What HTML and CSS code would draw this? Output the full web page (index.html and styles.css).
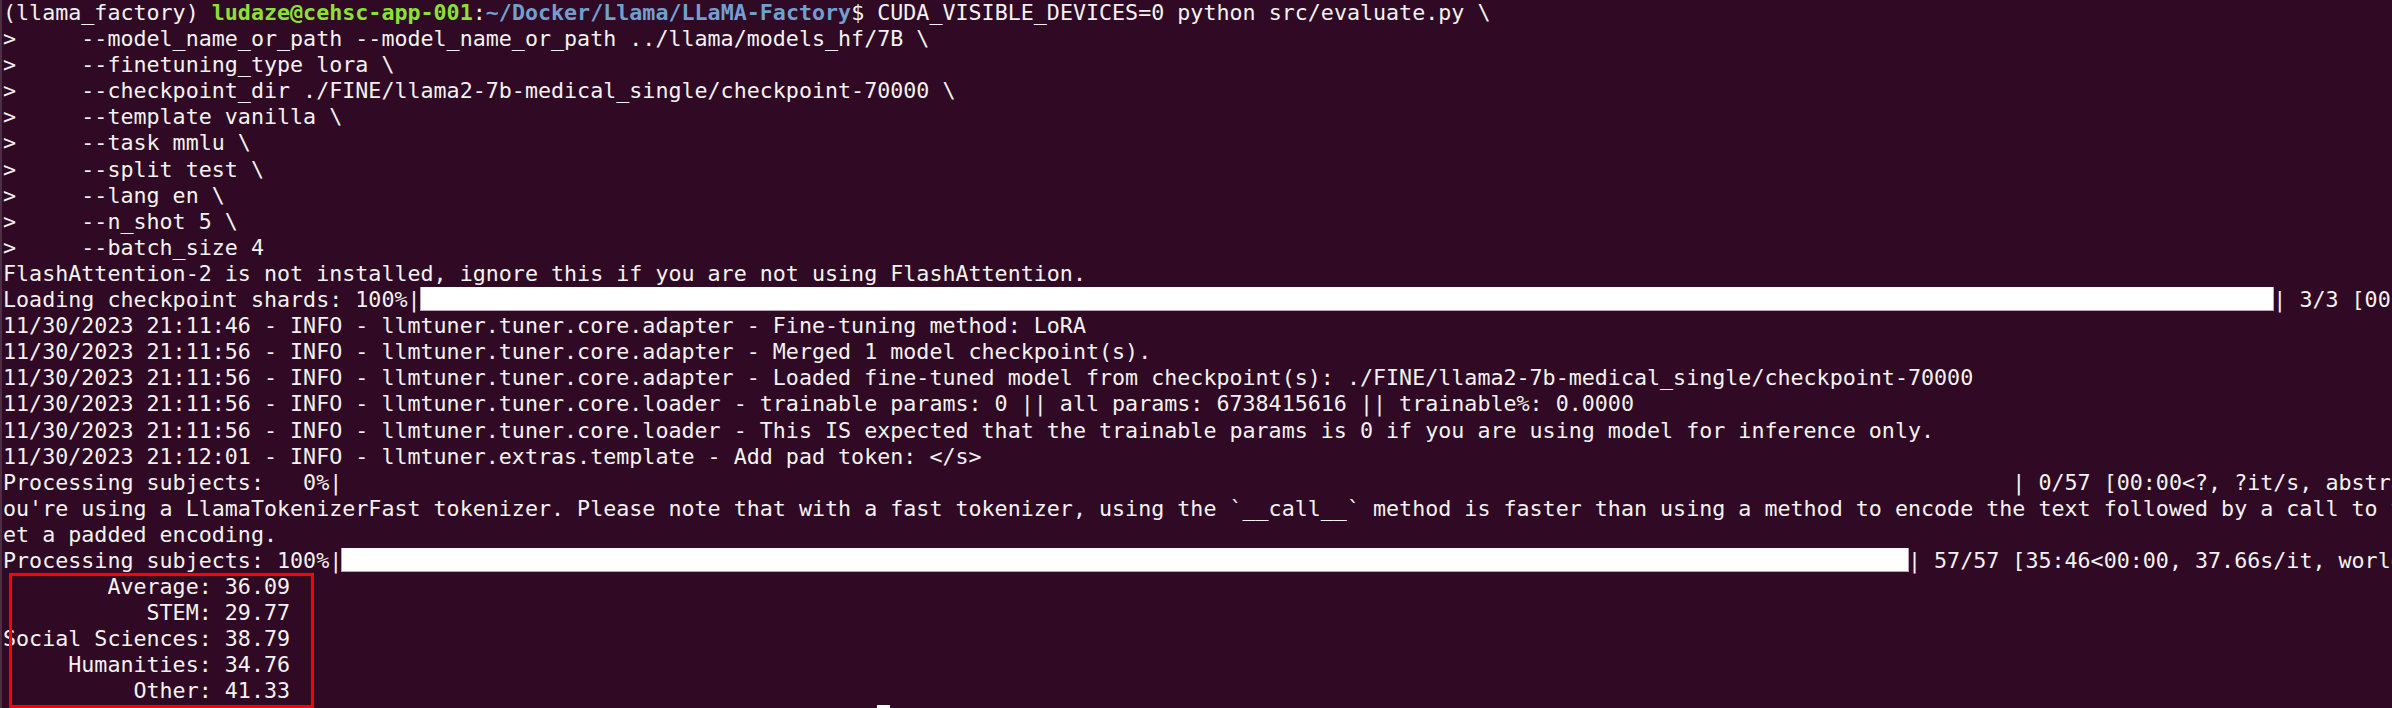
FILE: index.html
```html
<!DOCTYPE html>
<html lang="en">
<head>
<meta charset="utf-8">
<title>Terminal</title>
<link rel="stylesheet" href="styles.css">
</head>
<body>
<div class="screen">
<div class="term">
<div class="line">(llama_factory) <span class="user">ludaze@cehsc-app-001</span>:<span class="path">~/Docker/Llama/LLaMA-Factory</span>$ CUDA_VISIBLE_DEVICES=0 python src/evaluate.py \</div>
<div class="line">&gt;     --model_name_or_path --model_name_or_path ../llama/models_hf/7B \</div>
<div class="line">&gt;     --finetuning_type lora \</div>
<div class="line">&gt;     --checkpoint_dir ./FINE/llama2-7b-medical_single/checkpoint-70000 \</div>
<div class="line">&gt;     --template vanilla \</div>
<div class="line">&gt;     --task mmlu \</div>
<div class="line">&gt;     --split test \</div>
<div class="line">&gt;     --lang en \</div>
<div class="line">&gt;     --n_shot 5 \</div>
<div class="line">&gt;     --batch_size 4</div>
<div class="line">FlashAttention-2 is not installed, ignore this if you are not using FlashAttention.</div>
<div class="line">Loading checkpoint shards: 100%|<span class="bar bar-load"></span>| 3/3 [00:05&lt;00:00,  1.80s/it]</div>
<div class="line">11/30/2023 21:11:46 - INFO - llmtuner.tuner.core.adapter - Fine-tuning method: LoRA</div>
<div class="line">11/30/2023 21:11:56 - INFO - llmtuner.tuner.core.adapter - Merged 1 model checkpoint(s).</div>
<div class="line">11/30/2023 21:11:56 - INFO - llmtuner.tuner.core.adapter - Loaded fine-tuned model from checkpoint(s): ./FINE/llama2-7b-medical_single/checkpoint-70000</div>
<div class="line">11/30/2023 21:11:56 - INFO - llmtuner.tuner.core.loader - trainable params: 0 || all params: 6738415616 || trainable%: 0.0000</div>
<div class="line">11/30/2023 21:11:56 - INFO - llmtuner.tuner.core.loader - This IS expected that the trainable params is 0 if you are using model for inference only.</div>
<div class="line">11/30/2023 21:12:01 - INFO - llmtuner.extras.template - Add pad token: &lt;/s&gt;</div>
<div class="line">Processing subjects:   0%|<span class="gap"></span>| 0/57 [00:00&lt;?, ?it/s, abstract_algebra]</div>
<div class="line">ou're using a LlamaTokenizerFast tokenizer. Please note that with a fast tokenizer, using the `__call__` method is faster than using a method to encode the text followed by a call to the `pad` method to g</div>
<div class="line">et a padded encoding.</div>
<div class="line">Processing subjects: 100%|<span class="bar bar-proc"></span>| 57/57 [35:46&lt;00:00, 37.66s/it, world_religions]</div>
<div class="line">        Average: 36.09</div>
<div class="line">           STEM: 29.77</div>
<div class="line">Social Sciences: 38.79</div>
<div class="line">     Humanities: 34.76</div>
<div class="line">          Other: 41.33</div>
<div class="line">(llama_factory) <span class="user">ludaze@cehsc-app-001</span>:<span class="path">~/Docker/Llama/LLaMA-Factory</span>$ <span class="cursor"></span></div>
</div>
<div class="highlight"></div>
</div>
</body>
</html>
```

FILE: styles.css
```css
html, body {
  margin: 0;
  padding: 0;
  background: #300a24;
}

body {
  width: 2392px;
  height: 708px;
  overflow: hidden;
}

.screen {
  position: relative;
  width: 2392px;
  height: 708px;
  overflow: hidden;
  background: #300a24;
  border-left: 2px solid #4e2e44;
  box-sizing: border-box;
}

.term {
  padding-left: 1px;
  font-family: "DejaVu Sans Mono", "Liberation Mono", monospace;
  font-size: 21.68px;
  line-height: 26.1px;
  color: #f2f2f0;
}

.line {
  white-space: pre;
  height: 26.1px;
  overflow: hidden;
}

.user {
  color: #8ae234;
  font-weight: bold;
}

.path {
  color: #729fcf;
  font-weight: bold;
}

.bar {
  display: inline-block;
  vertical-align: top;
  margin-top: -2px;
  height: 25px;
  background: #ffffff;
  box-shadow: 0 0 0 1px #b9a6b4;
}

.bar-load {
  width: 142ch;
}

.bar-proc {
  width: 120ch;
}

.gap {
  display: inline-block;
  width: 128ch;
}

.cursor {
  display: inline-block;
  vertical-align: top;
  margin-top: -3px;
  width: 1ch;
  height: 25px;
  background: #ffffff;
}

.highlight {
  position: absolute;
  left: 7px;
  top: 573px;
  width: 305px;
  height: 135px;
  border: 3px solid #ff0000;
  box-sizing: border-box;
}
```
